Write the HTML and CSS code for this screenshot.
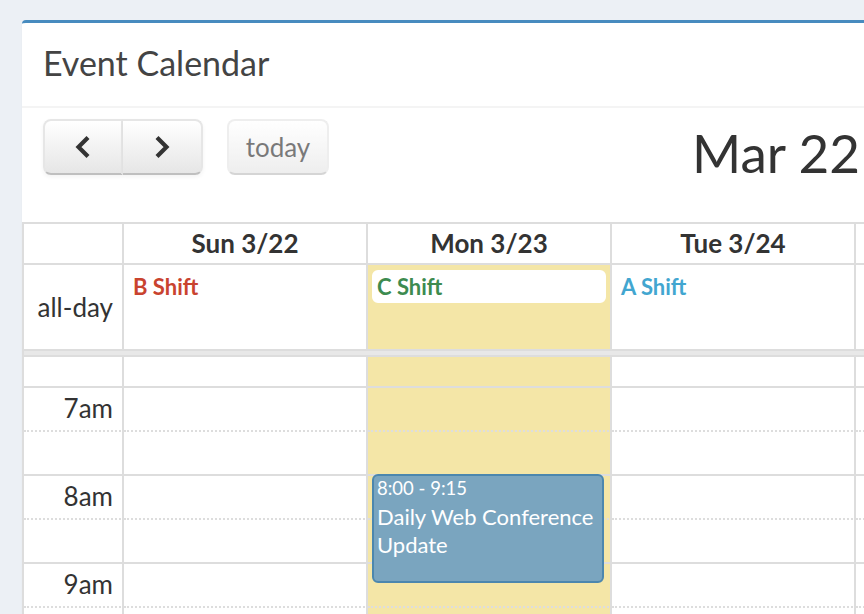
FILE: index.html
```html
<!DOCTYPE html>
<html lang="en">
<head>
    <meta charset="UTF-8">
    <meta name="viewport" content="width=device-width, initial-scale=1.0">
    <title>Event Calendar</title>
    <link rel="stylesheet" href="styles.css">
</head>
<body>

    <div class="box">
        <div class="box-header">
            <h3 class="box-title">Event Calendar</h3>
        </div>

        <div class="calendar">
            <div class="toolbar">
                <div class="btn-group">
                    <button class="fc-btn prev" type="button" aria-label="prev">
                        <svg width="16" height="24" viewBox="0 0 16 24"><polyline points="13,2.5 3.5,12 13,21.5" fill="none" stroke="#333" stroke-width="4.2"/></svg>
                    </button>
                    <button class="fc-btn next" type="button" aria-label="next">
                        <svg width="16" height="24" viewBox="0 0 16 24"><polyline points="3,2.5 12.5,12 3,21.5" fill="none" stroke="#333" stroke-width="4.2"/></svg>
                    </button>
                </div>
                <button class="fc-btn today-btn" type="button" disabled>today</button>
                <h2 class="range">Mar 22 – 28, 2015</h2>
            </div>

            <div class="view">
                <div class="row head">
                    <div class="cell axis"></div>
                    <div class="cell">Sun 3/22</div>
                    <div class="cell">Mon 3/23</div>
                    <div class="cell">Tue 3/24</div>
                    <div class="cell">Wed 3/25</div>
                    <div class="cell">Thu 3/26</div>
                    <div class="cell">Fri 3/27</div>
                    <div class="cell">Sat 3/28</div>
                </div>

                <div class="row allday">
                    <div class="cell axis">all-day</div>
                    <div class="cell"><a class="ev ev-red">B Shift</a></div>
                    <div class="cell is-today"><a class="ev ev-green">C Shift</a></div>
                    <div class="cell"><a class="ev ev-blue">A Shift</a></div>
                    <div class="cell"></div>
                    <div class="cell"></div>
                    <div class="cell"></div>
                    <div class="cell"></div>
                </div>

                <div class="divider"></div>

                <div class="slats">
                    <div class="row slot first">
                        <div class="cell axis"></div><div class="cell"></div><div class="cell is-today"></div><div class="cell"></div><div class="cell"></div><div class="cell"></div><div class="cell"></div><div class="cell"></div>
                    </div>
                    <div class="row slot minor">
                        <div class="cell axis">7am</div><div class="cell"></div><div class="cell is-today"></div><div class="cell"></div><div class="cell"></div><div class="cell"></div><div class="cell"></div><div class="cell"></div>
                    </div>
                    <div class="row slot">
                        <div class="cell axis"></div><div class="cell"></div><div class="cell is-today"></div><div class="cell"></div><div class="cell"></div><div class="cell"></div><div class="cell"></div><div class="cell"></div>
                    </div>
                    <div class="row slot minor">
                        <div class="cell axis">8am</div><div class="cell"></div><div class="cell is-today"></div><div class="cell"></div><div class="cell"></div><div class="cell"></div><div class="cell"></div><div class="cell"></div>
                    </div>
                    <div class="row slot">
                        <div class="cell axis"></div><div class="cell"></div><div class="cell is-today"></div><div class="cell"></div><div class="cell"></div><div class="cell"></div><div class="cell"></div><div class="cell"></div>
                    </div>
                    <div class="row slot minor">
                        <div class="cell axis">9am</div><div class="cell"></div><div class="cell is-today"></div><div class="cell"></div><div class="cell"></div><div class="cell"></div><div class="cell"></div><div class="cell"></div>
                    </div>
                    <div class="row slot">
                        <div class="cell axis"></div><div class="cell"></div><div class="cell is-today"></div><div class="cell"></div><div class="cell"></div><div class="cell"></div><div class="cell"></div><div class="cell"></div>
                    </div>

                    <a class="tev">
                        <div class="tev-time">8:00 - 9:15</div>
                        <div class="tev-title">Daily Web Conference Update</div>
                    </a>
                </div>
            </div>
        </div>
    </div>

</body>
</html>
```

FILE: styles.css
```css
* {
    box-sizing: border-box;
}

html,
body {
    overflow: hidden;
}

body {
    margin: 0;
    padding: 20px 0 0 22px;
    height: 614px;
    background: #ecf0f5;
    font-family: Lato, "Open Sans", sans-serif;
    color: #333;
}

.box {
    width: 1830px;
    background: #fff;
    border-top: 3px solid #478bbf;
    border-radius: 4px 0 0 0;
    box-shadow: 0 1px 1px rgba(0, 0, 0, 0.1);
}

.box-header {
    padding: 20px 21px 23px;
    border-bottom: 2px solid #f4f4f4;
}

.box-title {
    margin: 0;
    font-size: 34px;
    line-height: 40px;
    font-weight: 400;
    color: #444;
}

/* toolbar */

.toolbar {
    display: flex;
    align-items: flex-start;
    padding: 11px 21px 47px;
    white-space: nowrap;
}

.btn-group {
    display: flex;
}

.fc-btn {
    height: 56px;
    padding: 0;
    border: 2px solid;
    border-color: #e6e6e6 #e6e6e6 #bfbfbf;
    background: linear-gradient(to bottom, #fff, #e6e6e6);
    box-shadow: inset 0 2px 0 rgba(255, 255, 255, 0.2), 0 2px 4px rgba(0, 0, 0, 0.05);
    font-family: inherit;
    font-size: 26px;
    color: #333;
    display: flex;
    align-items: center;
    justify-content: center;
}

.prev {
    width: 80px;
    border-radius: 8px 0 0 8px;
}

.next {
    width: 80px;
    border-left: 0;
    border-radius: 0 8px 8px 0;
}

.today-btn {
    width: 102px;
    margin-left: 24px;
    border-radius: 8px;
    opacity: 0.65;
    box-shadow: none;
}

.range {
    margin: 14px 0 0 363px;
    font-size: 53px;
    line-height: 40px;
    font-weight: 400;
    color: #333;
}

/* grid */

.view {
    border-left: 2px solid #ddd;
    border-top: 2px solid #ddd;
}

.row {
    display: grid;
    grid-template-columns: 100px repeat(7, 244px);
}

.cell {
    border-right: 2px solid #ddd;
    border-bottom: 2px solid #ddd;
}

.head .cell {
    height: 41px;
    line-height: 39px;
    text-align: center;
    font-size: 26px;
    font-weight: 700;
}

.allday .cell {
    height: 86px;
}

.allday .axis {
    display: flex;
    align-items: center;
    justify-content: flex-end;
    padding-right: 9px;
    font-size: 26px;
}

.is-today {
    background: #f4e6a7;
}

.ev {
    display: block;
    margin: 5px 4px 0;
    padding: 0 3px;
    border: 2px solid transparent;
    border-radius: 6px;
    font-size: 22px;
    font-weight: 700;
    line-height: 29px;
}

.ev-red {
    color: #c9432f;
}

.ev-green {
    background: #fff;
    border-color: #fff;
    color: #3d8b4f;
}

.ev-blue {
    color: #42a6d0;
}

.divider {
    height: 6px;
    background: #e8e8e8;
    border-bottom: 2px solid #ddd;
}

.slats {
    position: relative;
}

.slot .cell {
    height: 44px;
}

.slot.first .cell {
    height: 31px;
}

.slot.minor .cell {
    border-bottom-style: dotted;
}

.slot .axis {
    padding: 2px 9px 0 0;
    text-align: right;
    font-size: 26px;
    line-height: 36px;
}

.tev {
    position: absolute;
    top: 117px;
    left: 348px;
    width: 232px;
    height: 109px;
    padding: 0 3px;
    background: #7aa5bf;
    border: 2px solid #4c87ae;
    border-radius: 6px;
    color: #fff;
    overflow: hidden;
}

.tev-time {
    padding-top: 2px;
    font-size: 18.5px;
    line-height: 20px;
}

.tev-title {
    margin-top: 5px;
    font-size: 22px;
    line-height: 28px;
}
```
